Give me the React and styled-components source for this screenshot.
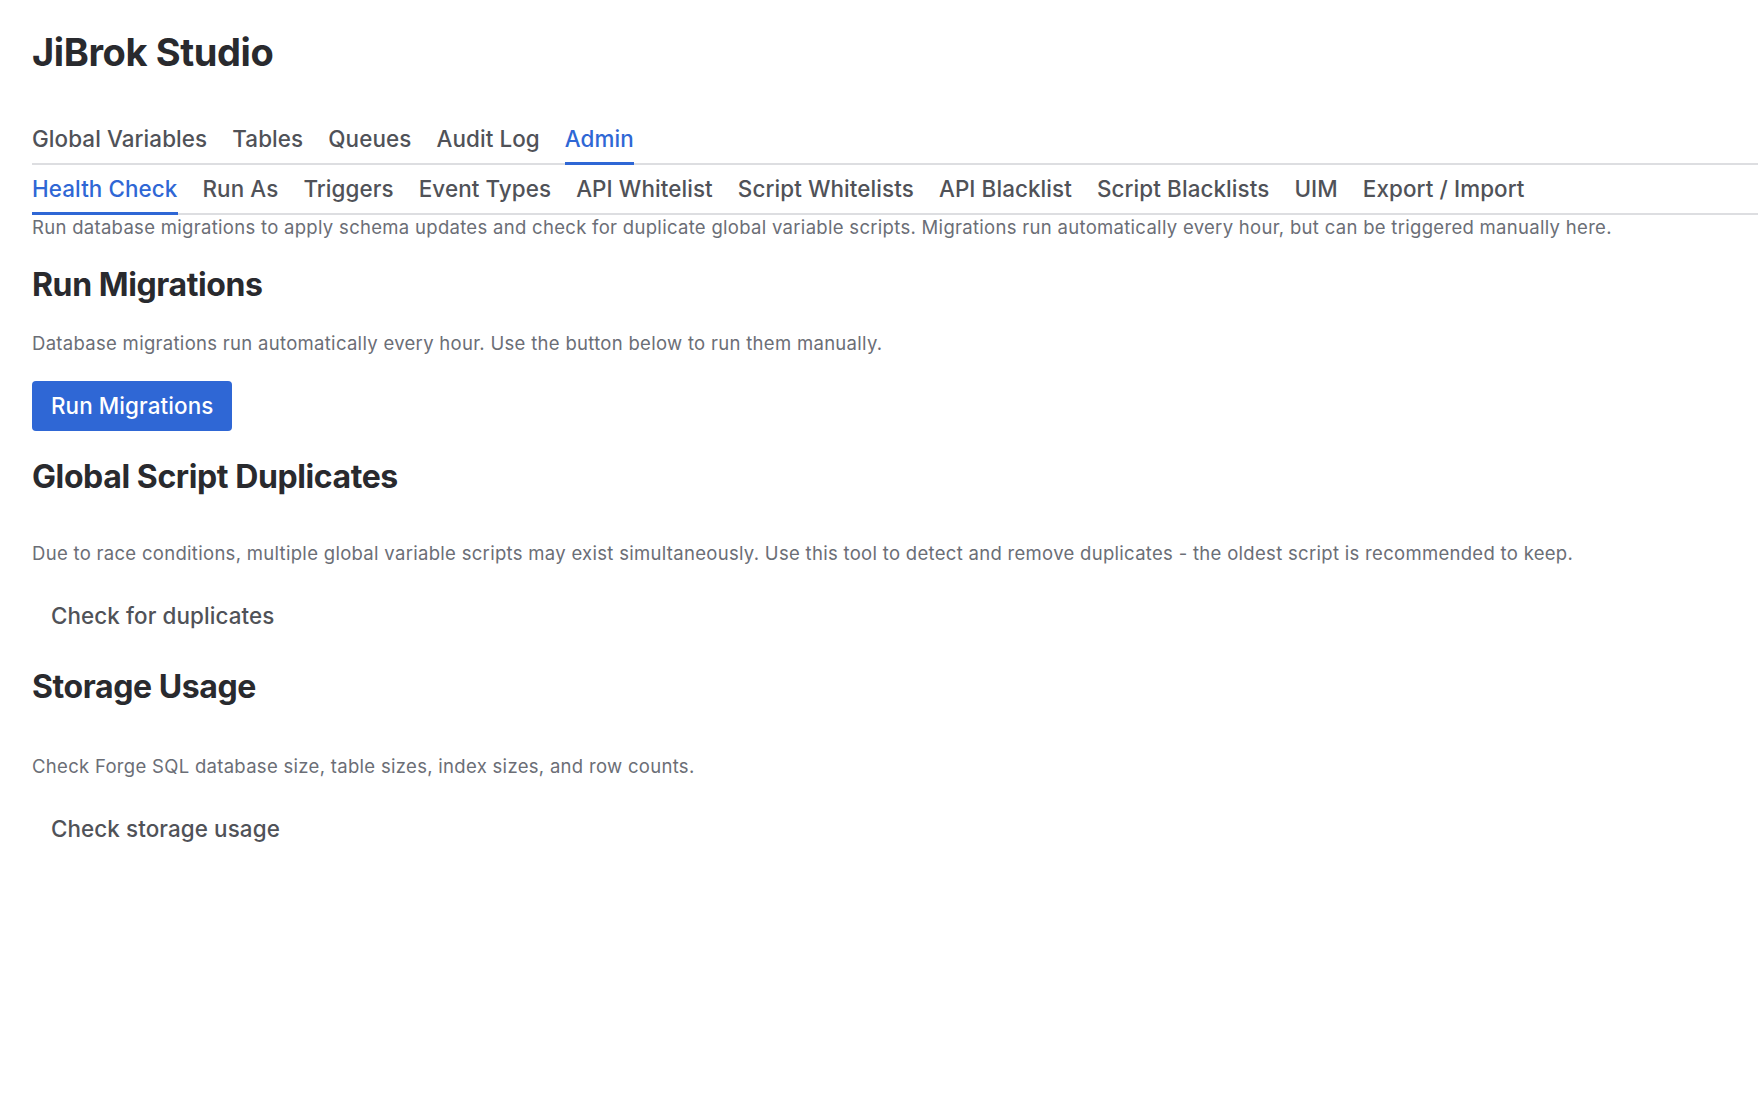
import styled, { createGlobalStyle } from "styled-components";

const GlobalStyle = createGlobalStyle`
  html, body {
    margin: 0;
    padding: 0;
    background: #ffffff;
    font-family: Inter, "Noto Sans", "Liberation Sans", sans-serif;
    color: #292a2e;
  }
`;

const Page = styled.div`
  padding: 28px 0 0 32px;
`;

const Title = styled.h1`
  margin: 0 0 39px 0;
  font-size: 38px;
  line-height: 48px;
  font-weight: 700;
  letter-spacing: -0.4px;
  color: #292a2e;
`;

const TabList = styled.div`
  display: flex;
  gap: 25px;
  box-shadow: inset 0 -2px 0 #dddee1;
`;

const Tab = styled.div`
  position: relative;
  padding: 10px 0 12px;
  font-size: 22.4px;
  line-height: 28px;
  font-weight: 500;
  letter-spacing: 0.1px;
  color: ${(p) => (p.active ? "#2f67d5" : "#505258")};
  cursor: pointer;

  &::after {
    content: "";
    display: ${(p) => (p.active ? "block" : "none")};
    position: absolute;
    left: 0;
    right: 0;
    bottom: 0;
    height: 3px;
    background: #2f67d5;
  }
`;

const Description = styled.p`
  margin: 0;
  font-size: 18.5px;
  line-height: 24px;
  letter-spacing: 0.3px;
  color: #6b6e76;
`;

const Section = styled.section`
  display: flex;
  flex-direction: column;
  align-items: flex-start;
  margin-top: 26px;
`;

const Heading = styled.h2`
  margin: 0 0 ${(p) => p.gap || 26}px 0;
  font-size: 32px;
  line-height: 40px;
  font-weight: 700;
  letter-spacing: -0.4px;
  color: #292a2e;
`;

const Text = styled.p`
  margin: 0 0 26px 0;
  font-size: 18.5px;
  line-height: 24px;
  letter-spacing: 0.3px;
  color: #6b6e76;
`;

const Button = styled.button`
  height: 50px;
  padding: 0 19px;
  border: none;
  border-radius: 4px;
  font-family: inherit;
  font-size: 22.4px;
  line-height: 28px;
  font-weight: 500;
  letter-spacing: 0.1px;
  cursor: pointer;
  background: ${(p) => (p.primary ? "#2f67d5" : "transparent")};
  color: ${(p) => (p.primary ? "#ffffff" : "#505258")};
`;

const mainTabs = ["Global Variables", "Tables", "Queues", "Audit Log", "Admin"];
const adminTabs = [
  "Health Check",
  "Run As",
  "Triggers",
  "Event Types",
  "API Whitelist",
  "Script Whitelists",
  "API Blacklist",
  "Script Blacklists",
  "UIM",
  "Export / Import",
];

export default function App() {
  return (
    <>
      <GlobalStyle />
      <Page>
        <Title>JiBrok Studio</Title>
        <TabList>
          {mainTabs.map((t) => (
            <Tab key={t} active={t === "Admin"}>{t}</Tab>
          ))}
        </TabList>
        <TabList>
          {adminTabs.map((t) => (
            <Tab key={t} active={t === "Health Check"}>{t}</Tab>
          ))}
        </TabList>
        <Description>
          Run database migrations to apply schema updates and check for duplicate global variable scripts. Migrations run automatically every hour, but can be triggered manually here.
        </Description>

        <Section>
          <Heading>Run Migrations</Heading>
          <Text>Database migrations run automatically every hour. Use the button below to run them manually.</Text>
          <Button primary>Run Migrations</Button>
        </Section>

        <Section>
          <Heading gap={44}>Global Script Duplicates</Heading>
          <Text>Due to race conditions, multiple global variable scripts may exist simultaneously. Use this tool to detect and remove duplicates - the oldest script is recommended to keep.</Text>
          <Button>Check for duplicates</Button>
        </Section>

        <Section>
          <Heading gap={47}>Storage Usage</Heading>
          <Text>Check Forge SQL database size, table sizes, index sizes, and row counts.</Text>
          <Button>Check storage usage</Button>
        </Section>
      </Page>
    </>
  );
}
